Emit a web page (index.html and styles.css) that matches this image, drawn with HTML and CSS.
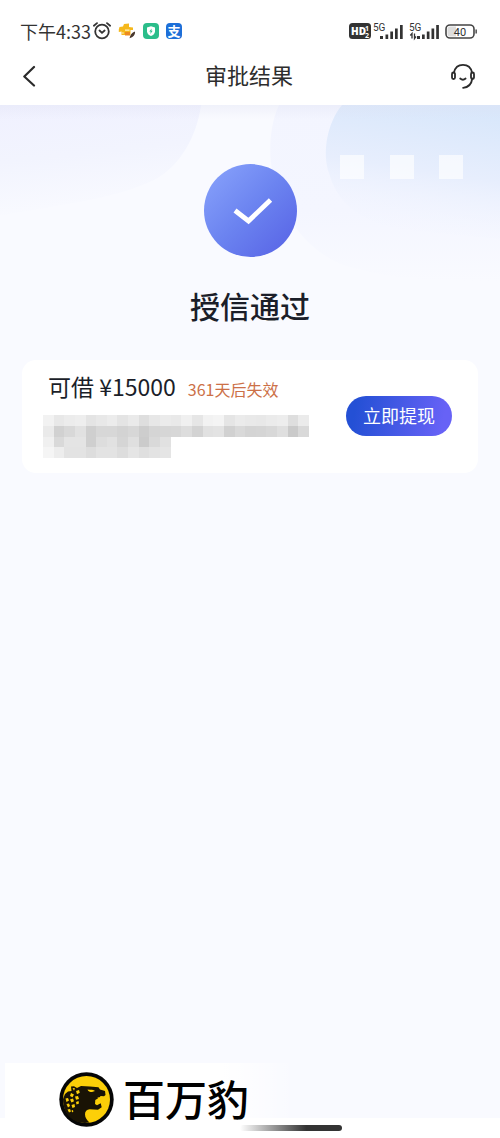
FILE: index.html
```html
<!DOCTYPE html>
<html lang="zh-CN">
<head>
<meta charset="utf-8">
<meta name="viewport" content="width=device-width, initial-scale=1">
<title>审批结果</title>
<link rel="stylesheet" href="styles.css">
</head>
<body>
<header class="header">
  <div class="status">
    <div class="status-left">
      <span class="time">下午4:33</span>
      <svg class="alarm" width="18" height="18" viewBox="0 0 18 18" fill="none" stroke="#333" stroke-width="1.8" stroke-linecap="round"><circle cx="9" cy="9.5" r="6.8"/><path d="M.9 3.7 4 1.1M14 1.1l3.100 2.600M6.500 8.500 9 10.800l2.600-2.300"/></svg>
      <svg width="18" height="18" viewBox="0 0 18 18"><path d="M1.500 5 5 4.500 6 2l5-.5V5l4 .5V8h-2.500v5h-9V9.500L.8 10V7.500z" fill="#f5b81c"/><path d="M7 10h5v3.500H7z" fill="#ed8a20"/><path d="M7 7.500h4.500v1.200H7zM3.800 10.500h2v1h-2z" fill="#fff3c4"/><path d="M17 9.500c.4 3-1.700 5.800-5.500 6.800.7-3.400 2.400-5.600 5.500-6.800z" fill="#49372c"/></svg>
      <svg width="16" height="16" viewBox="0 0 16 16"><rect width="16" height="16" rx="4" fill="#2bbd8a"/><path d="M8 3.200 12 4.500v3.700c0 2.300-1.600 3.800-4 4.800-2.400-1-4-2.500-4-4.800V4.500z" fill="#fff"/><path d="M8.700 5.500 6.300 8.500h1.400L7.300 11l2.400-3.200H8.300z" fill="#2bbd8a"/></svg>
      <span class="pay">支</span>
    </div>
    <div class="status-right">
      <svg width="22" height="16" viewBox="0 0 22 16"><rect width="22" height="16" rx="3.500" fill="#333"/><text x="2" y="12" class="hd">HD</text><text x="16" y="7.500" class="sim">1</text><text x="16" y="14.500" class="sim">2</text></svg>
      <svg width="31" height="17" viewBox="0 0 31 17"><text x="-2" y="8" class="net">5G</text><path d="M5 13h3v3H5zM10.500 11.500h2.700V16h-2.700zM15.300 8.500H18V16h-2.700zM20 5.500h2.700V16H20zM25 2h2.700v14H25z" fill="#333"/></svg>
      <svg width="31" height="17" viewBox="0 0 31 17"><text x="-1" y="8" class="net">5G</text><path d="M7 13h3v3H7zM12 11.500h2.700V16H12zM16.800 8.500h2.700V16h-2.700zM21.500 5.500h2.700V16h-2.700zM26.200 2h2.700v14h-2.700z" fill="#333"/><path d="M2 15.500v-5L.3 12.500M4.500 10.500v5l1.500-2" fill="none" stroke="#333" stroke-width="1.300"/></svg>
      <svg width="33" height="15" viewBox="0 0 33 15"><rect x="1" y="1" width="28" height="13" rx="4" fill="#fff" stroke="#444" stroke-width="1.600"/><path d="M5 2.500h6v10H5q-2.500 0-2.500-2.500V5q0-2.500 2.500-2.500z" fill="#ddd"/><path d="M30.500 5.500h1.300v4h-1.300z" fill="#333"/><text x="15" y="11.500" text-anchor="middle" class="level">40</text></svg>
    </div>
  </div>
  <nav class="nav">
    <button class="icon-button" type="button" aria-label="返回"><svg width="14" height="22" viewBox="0 0 14 22" fill="none" stroke="#2b2b2b" stroke-width="2.200" stroke-linecap="round" stroke-linejoin="round"><path d="M12 2 2.300 11.500 12 20.500"/></svg></button>
    <h1 class="nav-title">审批结果</h1>
    <button class="icon-button" type="button" aria-label="客服"><svg width="26" height="26" viewBox="0 0 26 26" fill="none" stroke="#2b2b2b" stroke-width="1.800" stroke-linecap="round"><path d="M4 9.500C5 4.500 8.500 1.800 13 1.800s8 2.700 9 7.700M22.300 15.500c-.8 5.500-4.300 9-9.200 9.300M10.200 15.500c1.700 1.500 3.700 1.500 5.400 0"/><rect x="2" y="9.500" width="3" height="6.500" rx="1.500"/><rect x="21" y="9.500" width="3" height="6.500" rx="1.500"/></svg></button>
  </nav>
</header>
<main class="main">
  <svg class="decor" viewBox="0 0 500 200" preserveAspectRatio="xMidYMin slice" aria-hidden="true">
    <defs>
      <linearGradient id="left" x1="0" y1="0" x2=".2" y2="1"><stop offset="0" stop-color="#f0f1ff"/><stop offset=".5" stop-color="#f2f4fe"/><stop offset="1" stop-color="#f9faff"/></linearGradient>
      <linearGradient id="outer" x1="0" y1="0" x2="0" y2="1"><stop offset="0" stop-color="#f3f5ff"/><stop offset=".6" stop-color="#f4f6ff"/><stop offset="1" stop-color="#f9faff"/></linearGradient>
      <linearGradient id="inner" x1=".7" y1="0" x2=".5" y2="1"><stop offset="0" stop-color="#d8e7fb"/><stop offset=".5" stop-color="#e7eefd"/><stop offset="1" stop-color="#f4f6ff" stop-opacity="0"/></linearGradient>
      <linearGradient id="shade" x1="0" y1="0" x2="0" y2="1"><stop offset="0" stop-color="#dfe1f2" stop-opacity=".35"/><stop offset="1" stop-color="#dfe1f2" stop-opacity="0"/></linearGradient>
    </defs>
    <path d="M0 0h201c-4 30-20 61-47 75C112 95 62 99 0 111z" fill="url(#left)"/>
    <path d="M279 0c-8 17-10 40-8 58 4 50 42 99 88 106 38 11 82 12 141 13V0z" fill="url(#outer)"/>
    <path d="M342 0c-15 18-20 48-13 68 10 38 44 54 86 58l85 8V0z" fill="url(#inner)"/>
    <path d="M340 50h24v24h-24zM390 50h24v24h-24zM439 50h24v24h-24z" fill="#fff" fill-opacity=".65"/>
    <path d="M0 0h500v14H0z" fill="url(#shade)"/>
  </svg>
  <section class="result">
    <div class="badge"><svg width="40" height="28" viewBox="0 0 40 28" fill="none" stroke="#fff" stroke-width="4.800"><path d="M2 12.500 15.500 23 37.500 2"/></svg></div>
    <h2 class="result-title">授信通过</h2>
  </section>
  <section class="card">
    <div class="card-info">
      <div class="card-heading"><span class="amount">可借 ¥15000</span><span class="expiry">361天后失效</span></div>
      <svg class="mosaic" viewBox="0 0 25 4" preserveAspectRatio="none" aria-hidden="true" shape-rendering="crispEdges"></svg>
    </div>
    <button class="withdraw" type="button">立即提现</button>
  </section>
</main>
<footer class="footer">
  <div class="brand">
    <svg width="55" height="55" viewBox="0 0 55 55" aria-hidden="true">
      <circle cx="27.500" cy="27.500" r="27.200" fill="#060606"/>
      <circle cx="27.500" cy="27.500" r="23.500" fill="#fccf08"/>
      <path d="M4 27l2-5 3-2.500 3.500-.5-.5-4.500 3-.2 3 1.700 4-2 9 .5 8.500.8 1.500 2.200 5 1.500.5 4-1.500 1.300-3.300-.3-1.700 1.700-3.700 2.300-.3 4 2 1.200 3.700-1.900 1 4-3.700 2.500-8.300-.5c-3 .3-4.700 2-4.700 5 0 3.500 2 6 4.500 8.200C15 53 4 43 4 27z" fill="#191305"/>
      <path d="M28.500 17.500c3 .2 6.500.3 7.500 1.500l-3 1c-2 0-4-.5-4.500-2.500zM38.500 25.500l1 2.500 1.200-2.700z" fill="#fccf08"/>
      <path d="M13.500 16l2.500.3-1 2.500zM17 19l3-1 .8 2.800-2.800 1.400zM12 21l3 1.500-1.500 2.700-2.500-1.200zM6.500 26.500l2.500-.5 1 2.500-2.500 1.500zM11 27.500l3-1 1 2.700-2.500 1.300zM16 24.500l3-.5 1 3-3 .8zM7.500 32l2.500-.5 1 2.500-2 1.500zM12.500 33l3-1 .5 3-2.500 1zM17 30l2.500-1 .5 2.500-2.500 1zM8.500 37.500l2.500-.5 1 2.500-2 1zM12.500 38.500l1.500-.5.3 2-1.300.3z" fill="#fccf08"/>
    </svg>
    <span class="brand-name">百万豹</span>
  </div>
  <div class="home-indicator"></div>
</footer>
<script src="mosaic.js"></script>
</body>
</html>
```

FILE: styles.css
```css
* { box-sizing: border-box; }

body {
  margin: 0;
  min-height: 100vh;
  display: flex;
  flex-direction: column;
  background: #f9faff;
  color: #1b1e29;
  font-family: "Noto Sans CJK SC", "Noto Sans", sans-serif;
}

button {
  padding: 0;
  border: 0;
  background: none;
  font-family: inherit;
}

svg { display: block; flex: none; }

.header { background: #fff; }

.status {
  display: flex;
  justify-content: space-between;
  align-items: center;
  height: 46px;
  padding: 16px 22px 0 20px;
}

.status-left { display: flex; align-items: center; gap: 7px; }
.time { font-size: 18px; line-height: 30px; color: #333; }
.alarm { margin-left: -5px; }

.pay {
  width: 16px;
  border-radius: 4px;
  background: #1d6fd8;
  color: #fff;
  font-size: 13px;
  font-weight: 700;
  line-height: 16px;
  text-align: center;
}

.status-right { display: flex; align-items: center; gap: 4px; }

.hd { font: 800 10px "Open Sans", sans-serif; fill: #fff; }
.sim { font: 700 7px "Open Sans", sans-serif; fill: #fff; }
.net { font: 400 10px Roboto, sans-serif; fill: #333; }
.level { font: 400 11px Roboto, sans-serif; fill: #333; }
.status-right svg { overflow: visible; }

.nav {
  display: flex;
  align-items: center;
  justify-content: space-between;
  height: 59px;
  padding: 0 24px 0 22px;
}

.icon-button {
  display: flex;
  align-items: center;
  width: 26px;
  height: 44px;
}

.nav-title {
  margin: 0;
  padding-bottom: 4px;
  font-size: 22px;
  font-weight: 400;
  line-height: 32px;
  color: #2d2d2d;
}

.main { position: relative; flex: 1; padding: 59px 22px 24px; }

.decor { position: absolute; top: 0; left: 0; width: 100%; height: 200px; }

.result {
  position: relative;
  display: flex;
  flex-direction: column;
  align-items: center;
  gap: 28px;
}

.badge {
  display: flex;
  align-items: center;
  justify-content: center;
  width: 93px;
  height: 93px;
  padding: 2px 0 0 5px;
  border-radius: 50%;
  background: linear-gradient(135deg, #87a1fb 5%, #6b83f0 50%, #5864e6 95%);
}

.result-title {
  margin: 0;
  font-size: 30px;
  font-weight: 500;
  line-height: 40px;
}

.card {
  position: relative;
  display: flex;
  align-items: center;
  justify-content: space-between;
  margin-top: 35px;
  padding: 13px 26px 15px 21px;
  border-radius: 14px;
  background: #fff;
}

.card-info { display: flex; flex-direction: column; gap: 14px; }

.card-heading {
  display: flex;
  align-items: baseline;
  gap: 12px;
  height: 28px;
  padding-left: 5px;
  line-height: 26px;
  white-space: nowrap;
}

.amount { font-size: 23px; }
.expiry { font-size: 16px; color: #cc7047; }

.mosaic { width: 266px; height: 43px; }

.withdraw {
  padding: 0 17px 2px;
  border-radius: 20px;
  background: linear-gradient(100deg, #2450d5 10%, #6762f6 90%);
  color: #fff;
  font-size: 18px;
  line-height: 38px;
  white-space: nowrap;
}

.footer {
  position: relative;
  padding-left: 5px;
  background: linear-gradient(to bottom, transparent 55px, #fff 55px);
}

.brand {
  display: flex;
  align-items: center;
  gap: 9px;
  width: 290px;
  height: 75px;
  padding: 0 0 2px 54px;
  background: linear-gradient(to right, #fff 75%, transparent);
}

.brand-name {
  font-family: STXingkai, KaiTi, "Noto Sans CJK SC", sans-serif;
  font-size: 42px;
  font-weight: 500;
  line-height: 48px;
  padding-bottom: 4px;
  color: #000;
}

.home-indicator {
  position: absolute;
  bottom: 7px;
  left: 50%;
  width: 102px;
  height: 6px;
  margin-left: -10px;
  border-radius: 3px;
  background: linear-gradient(to right, transparent, #333 65%);
}
```

FILE: mosaic.js
```js
// Grey levels of the redacted account line, one row of blocks per entry.
const rows = [
  "f2 e8 ec ee e4 e8 ec e4 ea de e7 eb e9 f0 e6 f2 f4 e5 eb e9 e8 eb ed de eb",
  "ea d1 d8 e1 cf d7 d7 d3 d7 cd d5 d6 d7 dd d3 e1 e3 d1 d9 d4 d5 d8 df ca d9",
  "f0 d9 e4 e4 cf dd e1 d5 df cb d9 e1",
  "f5 ed e3 e3 dd e3 e3 dd e5 df e3 e5"
];
const mosaic = document.querySelector(".mosaic");
rows.forEach((row, y) => row.split(" ").forEach((level, x) => {
  const block = document.createElementNS("http://www.w3.org/2000/svg", "rect");
  block.setAttribute("x", x);
  block.setAttribute("y", y);
  block.setAttribute("width", 1);
  block.setAttribute("height", 1);
  block.setAttribute("fill", "#" + level.repeat(3));
  mosaic.append(block);
}));
```
